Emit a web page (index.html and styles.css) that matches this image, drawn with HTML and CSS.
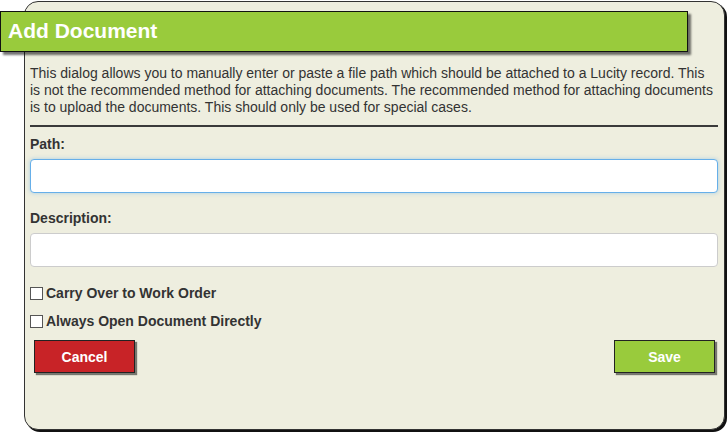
FILE: index.html
```html
<!DOCTYPE html>
<html>
<head>
<meta charset="utf-8">
<link rel="stylesheet" href="styles.css">
</head>
<body>
<div class="dialog">
  <div class="header">Add Document</div>
  <div class="content">
    <p class="intro">This dialog allows you to manually enter or paste a file path which should be attached to a Lucity record. This is not the recommended method for attaching documents. The recommended method for attaching documents is to upload the documents. This should only be used for special cases.</p>
    <div class="rule"></div>
    <label class="field-label">Path:</label>
    <input class="field focus" type="text">
    <label class="field-label second">Description:</label>
    <input class="field" type="text">
    <div class="checks">
      <label class="check"><span class="box"></span>Carry Over to Work Order</label>
      <label class="check"><span class="box"></span>Always Open Document Directly</label>
    </div>
    <div class="buttons">
      <button class="btn cancel">Cancel</button>
      <button class="btn save">Save</button>
    </div>
  </div>
</div>
</body>
</html>
```
FILE: styles.css
```css
html, body {
  margin: 0;
  padding: 0;
  background: #ffffff;
}
body {
  font-family: "Liberation Sans", Arial, sans-serif;
  color: #333333;
  width: 727px;
  height: 433px;
  overflow: hidden;
}
.dialog {
  box-sizing: border-box;
  margin: 1px 0 0 24px;
  width: 701px;
  height: 429px;
  background: #eeeedf;
  border: 1px solid #333333;
  border-radius: 14px;
  box-shadow: 2px 2px 0 #111111;
  display: flex;
  flex-direction: column;
}
.header {
  box-sizing: border-box;
  margin: 9px 0 0 -25px;
  width: 688px;
  height: 41px;
  background: #99cb3c;
  border: 1px solid #111111;
  box-shadow: 3px 3px 2px rgba(0, 0, 0, 0.55);
  color: #ffffff;
  font-weight: bold;
  font-size: 21px;
  line-height: 38px;
  padding-left: 7px;
}
.content {
  padding: 0 6px 0 5px;
  display: flex;
  flex-direction: column;
}
.intro {
  margin: 13px 0 0 0;
  font-size: 14px;
  line-height: 17px;
  color: #333333;
}
.rule {
  margin-top: 9px;
  height: 2px;
  background: #3a3a3a;
}
.field-label {
  font-weight: bold;
  font-size: 14px;
  line-height: 16px;
  margin-top: 9px;
  color: #333333;
}
.field-label.second {
  margin-top: 17px;
}
.field {
  box-sizing: border-box;
  margin-top: 7px;
  width: 688px;
  height: 34px;
  background: #ffffff;
  border: 1px solid #cccccc;
  border-radius: 4px;
  outline: none;
  font-family: inherit;
}
.field.focus {
  border-color: #66afe9;
  box-shadow: 0 0 4px rgba(102, 175, 233, 0.5);
}
.checks {
  margin-top: 18px;
  display: flex;
  flex-direction: column;
  gap: 12px;
}
.check {
  display: flex;
  align-items: center;
  font-weight: bold;
  font-size: 14px;
  line-height: 16px;
  color: #333333;
}
.box {
  box-sizing: border-box;
  width: 13px;
  height: 13px;
  border: 1px solid #555555;
  background: #ffffff;
  margin-right: 3px;
}
.buttons {
  margin-top: 11px;
  display: flex;
  justify-content: space-between;
  padding: 0 3px 0 4px;
}
.btn {
  box-sizing: border-box;
  width: 101px;
  height: 33px;
  border: 1px solid #222222;
  box-shadow: 2px 2px 1px rgba(0, 0, 0, 0.5);
  color: #ffffff;
  font-family: "Liberation Sans", Arial, sans-serif;
  font-weight: bold;
  font-size: 14px;
  padding: 0;
}
.cancel {
  background: #c82327;
}
.save {
  background: #99cb3c;
}
```
